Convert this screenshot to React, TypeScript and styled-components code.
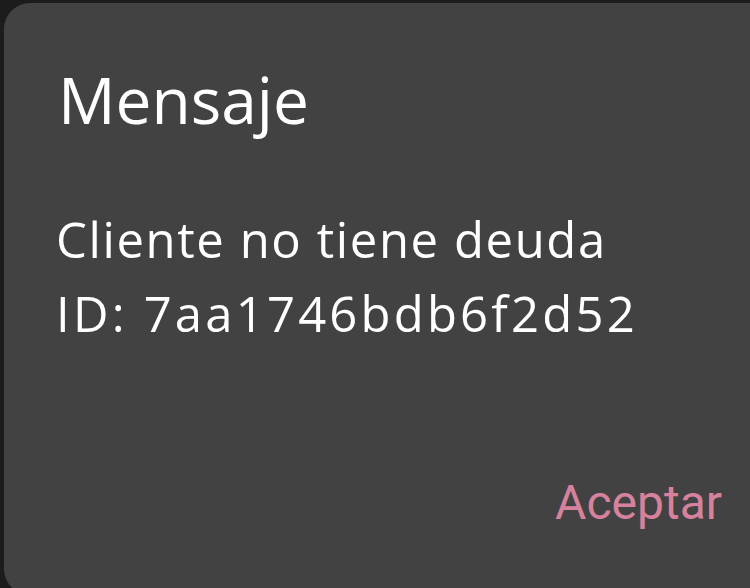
import styled, { createGlobalStyle } from "styled-components";

const GlobalStyle = createGlobalStyle`
	html,
	body {
		margin: 0;
		padding: 0;
		width: 100%;
		height: 100%;
		overflow: hidden;
		background: #1c1c1c;
	}
`;

const Backdrop = styled.div`
	width: 750px;
	height: 588px;
	padding: 3px 0 0 4px;
	box-sizing: border-box;
	overflow: hidden;
`;

const Dialog = styled.section`
	width: 772px;
	height: 592px;
	box-sizing: border-box;
	background: #424242;
	border-radius: 26px;
	padding: 63px 0 0 54px;
	display: flex;
	flex-direction: column;
	color: #ffffff;
	font-family: "Open Sans", "Noto Sans", sans-serif;
`;

const Title = styled.h2`
	margin: 0;
	font-size: 64px;
	font-weight: 400;
	line-height: 68px;
`;

const Body = styled.div`
	margin-top: 68px;
	margin-left: -2px;
	font-size: 49px;
	line-height: 74px;
	display: flex;
	flex-direction: column;
`;

const Line = styled.span<{ $tracking: number }>`
	letter-spacing: ${(props) => props.$tracking}px;
`;

const Actions = styled.div`
	margin-top: auto;
	margin-bottom: 64px;
	width: 664px;
	display: flex;
	justify-content: flex-end;
`;

const TextButton = styled.button`
	border: none;
	background: none;
	padding: 0;
	font-family: "Roboto", sans-serif;
	font-size: 48px;
	line-height: 56px;
	color: #d6829e;
	cursor: pointer;
`;

export default function App() {
	return (
		<>
			<GlobalStyle />
			<Backdrop>
				<Dialog>
					<Title>Mensaje</Title>
					<Body>
						<Line $tracking={1.6}>Cliente no tiene deuda</Line>
						<Line $tracking={3.2}>ID: 7aa1746bdb6f2d52</Line>
					</Body>
					<Actions>
						<TextButton>Aceptar</TextButton>
					</Actions>
				</Dialog>
			</Backdrop>
		</>
	);
}
